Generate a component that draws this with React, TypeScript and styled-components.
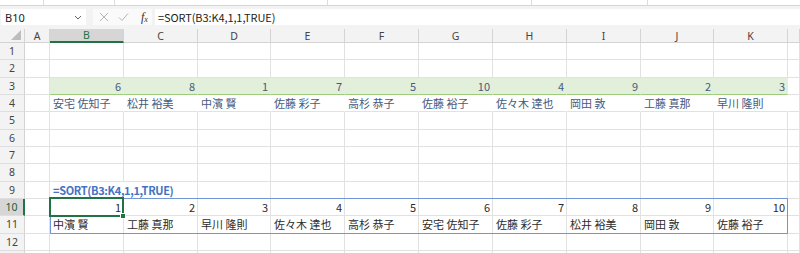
import React from 'react';
import styled, { createGlobalStyle, css } from 'styled-components';

const GlobalStyle = createGlobalStyle`
  html, body { margin: 0; padding: 0; background: #ffffff; overflow: hidden; }
  body { width: 800px; height: 253px; font-family: "Noto Sans", "Noto Sans CJK JP", sans-serif; }
`;

const CELL_FONT = `"Noto Sans CJK JP", "Noto Sans", sans-serif`;
const GREEN = '#217346';

/* ---------- top ribbon remnant ---------- */
const RibbonStrip = styled.div`
  display: flex;
  height: 5px;
  background: #ffffff;
  border-bottom: 1px solid #d6d6d6;
`;
const RibbonGroup = styled.div<{ $w?: number }>`
  ${p => (p.$w ? `width: ${p.$w}px;` : 'flex: 1;')}
  border-right: 1px solid #dcdcdc;
  &:last-child { border-right: none; }
`;

/* ---------- formula bar ---------- */
const FormulaBar = styled.div`
  display: flex;
  align-items: flex-start;
  height: 23px;
  padding-top: 3px;
  box-sizing: border-box;
  background: #f3f3f3;
`;
const NameBox = styled.div`
  display: flex;
  align-items: center;
  justify-content: space-between;
  width: 85px;
  height: 16px;
  margin-left: 1px;
  padding: 0 4px 0 4px;
  box-sizing: border-box;
  background: #ffffff;
  font-family: "Noto Sans", sans-serif;
  font-size: 11px;
  color: #222;
`;
const FxBox = styled.div`
  display: flex;
  align-items: center;
  width: 59px;
  height: 16px;
  margin-left: 7px;
  padding-left: 6px;
  gap: 9px;
  box-sizing: border-box;
  background: #fafafa;
`;
const FxLabel = styled.span`
  font-family: "Liberation Serif", serif;
  font-style: italic;
  font-size: 12px;
  color: #333;
  margin-left: 3px;
  line-height: 1;
  sub { font-size: 8px; vertical-align: -1px; }
`;
const FormulaInput = styled.div`
  flex: 1;
  height: 16px;
  margin-left: 3px;
  padding-left: 3px;
  display: flex;
  align-items: center;
  background: #ffffff;
  font-family: ${CELL_FONT};
  font-size: 11px;
  color: #222;
  letter-spacing: -0.1px;
`;

/* ---------- sheet ---------- */
const Sheet = styled.div`
  display: grid;
  grid-template-columns: 25px 25px 74px 74px 73px 74px 74px 74px 74px 74px 73px 74px 12px;
  grid-template-rows: 14px repeat(13, 17.33px);
  height: 224px;
  overflow: hidden;
  background: #ffffff;
`;

const HeaderCell = styled.div<{ $r: number; $c: number; $sel?: boolean }>`
  grid-row: ${p => p.$r};
  grid-column: ${p => p.$c};
  display: flex;
  align-items: center;
  justify-content: center;
  background: ${p => (p.$sel ? '#d6d6d6' : '#f3f3f3')};
  border-right: 1px solid #d4d4d4;
  border-bottom: 1px solid #d4d4d4;
  box-sizing: border-box;
  font-family: "Noto Sans", sans-serif;
  font-size: 10.5px;
  color: ${p => (p.$sel ? GREEN : '#444')};
  ${p =>
    p.$sel &&
    css`
      border-bottom: 2px solid ${GREEN};
    `}
`;

const RowHeader = styled.div<{ $r: number; $sel?: boolean }>`
  grid-row: ${p => p.$r};
  grid-column: 1;
  display: flex;
  align-items: center;
  justify-content: center;
  background: ${p => (p.$sel ? '#d6d6d6' : '#f3f3f3')};
  border-right: 1px solid #d4d4d4;
  border-bottom: 1px solid #dedede;
  box-sizing: border-box;
  font-family: "Noto Sans", sans-serif;
  font-size: 10.5px;
  color: ${p => (p.$sel ? '#1e5c3a' : '#444')};
  ${p =>
    p.$sel &&
    css`
      border-right: 2px solid ${GREEN};
    `}
`;

const Corner = styled.div`
  grid-row: 1;
  grid-column: 1;
  position: relative;
  background: #f3f3f3;
  border-right: 1px solid #d4d4d4;
  border-bottom: 1px solid #d4d4d4;
  box-sizing: border-box;
`;
const CornerTriangle = styled.div`
  position: absolute;
  right: 3px;
  bottom: 2px;
  width: 0;
  height: 0;
  border-left: 10px solid transparent;
  border-bottom: 10px solid #bdbdbd;
`;

type Tone = 'blue' | 'dark' | 'formula';
const Cell = styled.div<{
  $r: number;
  $c: number;
  $align?: 'left' | 'right';
  $tone?: Tone;
  $fill?: 'green' | 'plain';
  $overflow?: boolean;
}>`
  grid-row: ${p => p.$r};
  grid-column: ${p => p.$c};
  display: flex;
  align-items: center;
  justify-content: ${p => (p.$align === 'right' ? 'flex-end' : 'flex-start')};
  padding: 0 2px 0 3px;
  box-sizing: border-box;
  border-right: 1px solid #e1e1e1;
  border-bottom: 1px solid #e1e1e1;
  font-family: ${CELL_FONT};
  font-size: 11px;
  white-space: nowrap;
  overflow: hidden;
  color: ${p => (p.$tone === 'blue' ? '#48597c' : p.$tone === 'formula' ? '#4472c4' : '#2b2b2b')};
  ${p =>
    p.$tone === 'formula' &&
    css`
      font-weight: 700;
      letter-spacing: -0.35px;
    `}
  ${p =>
    p.$fill === 'green' &&
    css`
      background: #e2efda;
      border-right-color: #e2efda;
      border-bottom: 1.5px solid #9bcb7b;
    `}
  ${p =>
    p.$fill === 'plain' &&
    css`
      background: #ffffff;
      border-right-color: #ffffff;
    `}
  ${p =>
    p.$overflow &&
    css`
      overflow: visible;
      border-right-color: #ffffff;
      z-index: 1;
    `}
`;

const SpillBox = styled.div`
  grid-row: 11 / 13;
  grid-column: 3 / 13;
  margin-top: -1px;
  border: 1px solid #7196d8;
  box-sizing: border-box;
  z-index: 2;
  pointer-events: none;
`;
const ActiveCell = styled.div`
  grid-row: 11;
  grid-column: 3;
  position: relative;
  margin: -2px 0 -1px -1px;
  border: 2px solid ${GREEN};
  box-sizing: border-box;
  z-index: 3;
  pointer-events: none;
  &::after {
    content: '';
    position: absolute;
    right: -4px;
    bottom: -4px;
    width: 4px;
    height: 4px;
    background: ${GREEN};
    border: 1px solid #ffffff;
  }
`;

const Icon = styled.svg`
  display: block;
  flex: none;
`;

const letters = ['A', 'B', 'C', 'D', 'E', 'F', 'G', 'H', 'I', 'J', 'K', ''];
const nums = [6, 8, 1, 7, 5, 10, 4, 9, 2, 3];
const names = ['安宅 佐知子', '松井 裕美', '中濱 賢', '佐藤 彩子', '高杉 恭子', '佐藤 裕子', '佐々木 達也', '岡田 敦', '工藤 真那', '早川 隆則'];
const sortedNames = ['中濱 賢', '工藤 真那', '早川 隆則', '佐々木 達也', '高杉 恭子', '安宅 佐知子', '佐藤 彩子', '松井 裕美', '岡田 敦', '佐藤 裕子'];

function renderRow(row: number) {
  const r = row + 1;
  const cells: React.ReactNode[] = [];
  cells.push(
    <RowHeader key={`h${row}`} $r={r} $sel={row === 10}>
      {row <= 12 ? row : ''}
    </RowHeader>
  );
  for (let c = 2; c <= 13; c++) {
    const k = c - 3; // index in B..K
    const inData = k >= 0 && k < 10;
    const key = `${row}-${c}`;
    if (row === 3 && inData) {
      cells.push(
        <Cell key={key} $r={r} $c={c} $align="right" $tone="blue" $fill="green">
          {nums[k]}
        </Cell>
      );
    } else if (row === 4 && inData) {
      cells.push(
        <Cell key={key} $r={r} $c={c} $tone="blue" $fill="plain">
          {names[k]}
        </Cell>
      );
    } else if (row === 9 && c === 3) {
      cells.push(
        <Cell key={key} $r={r} $c={c} $tone="formula" $overflow>
          =SORT(B3:K4,1,1,TRUE)
        </Cell>
      );
    } else if (row === 10 && inData) {
      cells.push(
        <Cell key={key} $r={r} $c={c} $align="right">
          {k + 1}
        </Cell>
      );
    } else if (row === 11 && inData) {
      cells.push(
        <Cell key={key} $r={r} $c={c}>
          {sortedNames[k]}
        </Cell>
      );
    } else {
      cells.push(<Cell key={key} $r={r} $c={c} />);
    }
  }
  return cells;
}

export default function App() {
  const rows = Array.from({ length: 13 }, (_, i) => i + 1);
  return (
    <>
      <GlobalStyle />
      <RibbonStrip>
        <RibbonGroup $w={43} />
        <RibbonGroup $w={70} />
        <RibbonGroup $w={212} />
        <RibbonGroup $w={203} />
        <RibbonGroup $w={115} />
        <RibbonGroup />
      </RibbonStrip>
      <FormulaBar>
        <NameBox>
          <span>B10</span>
          <Icon width="8" height="5" viewBox="0 0 8 5">
            <path d="M1 1 L4 4 L7 1" fill="none" stroke="#666" strokeWidth="1" />
          </Icon>
        </NameBox>
        <FxBox>
          <Icon width="10" height="10" viewBox="0 0 10 10">
            <path d="M1 1 L9 9 M9 1 L1 9" stroke="#b5b5b5" strokeWidth="1" />
          </Icon>
          <Icon width="11" height="10" viewBox="0 0 11 10">
            <path d="M1 5.5 L4 8.5 L10 1.5" fill="none" stroke="#b5b5b5" strokeWidth="1" />
          </Icon>
          <FxLabel>
            f<sub>x</sub>
          </FxLabel>
        </FxBox>
        <FormulaInput>=SORT(B3:K4,1,1,TRUE)</FormulaInput>
      </FormulaBar>
      <Sheet>
        <Corner>
          <CornerTriangle />
        </Corner>
        {letters.map((l, i) => (
          <HeaderCell key={`c${i}`} $r={1} $c={i + 2} $sel={l === 'B'}>
            {l}
          </HeaderCell>
        ))}
        {rows.map(renderRow)}
        <SpillBox />
        <ActiveCell />
      </Sheet>
    </>
  );
}
